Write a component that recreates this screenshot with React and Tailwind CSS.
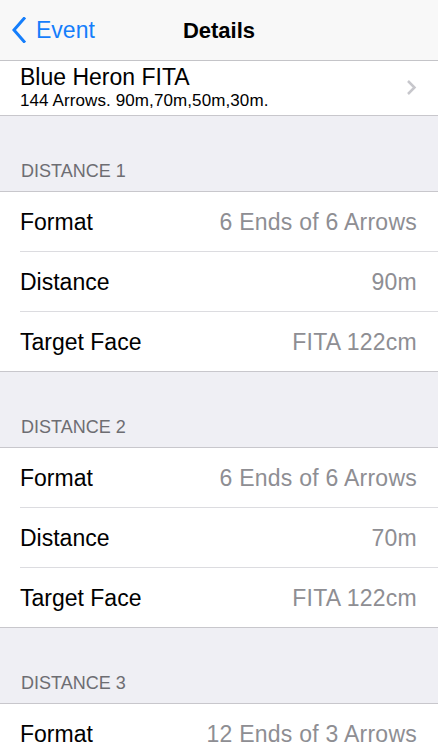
import React from "react";

const sections = [
    {
        title: "DISTANCE 1",
        rows: [
            { label: "Format", value: "6 Ends of 6 Arrows" },
            { label: "Distance", value: "90m" },
            { label: "Target Face", value: "FITA 122cm" },
        ],
    },
    {
        title: "DISTANCE 2",
        rows: [
            { label: "Format", value: "6 Ends of 6 Arrows" },
            { label: "Distance", value: "70m" },
            { label: "Target Face", value: "FITA 122cm" },
        ],
    },
    {
        title: "DISTANCE 3",
        rows: [
            { label: "Format", value: "12 Ends of 3 Arrows" },
            { label: "Distance", value: "50m" },
            { label: "Target Face", value: "FITA 122cm" },
        ],
    },
];

const App = () => {
    return (
        <div className="w-[438px] h-[750px] overflow-hidden bg-[#efeff4] font-['Liberation_Sans',Arial,sans-serif] text-black">
            {/* Nav bar */}
            <div className="relative h-[61px] bg-[#f8f8f8] border-b border-[#c4c4c8] flex items-center justify-center">
                <div className="absolute left-[12px] top-0 h-[60px] flex items-center text-[#157efb]">
                    <svg width="14" height="26" viewBox="0 0 14 26" className="mr-[10px]">
                        <path d="M12 1.5 L2 13 L12 24.5" fill="none" stroke="#157efb" strokeWidth="3" strokeLinecap="square" strokeLinejoin="miter" />
                    </svg>
                    <span className="text-[23px] leading-none">Event</span>
                </div>
                <span className="text-[22px] font-bold leading-none mt-[2px]">Details</span>
            </div>

            {/* Round cell */}
            <div className="h-[55px] bg-white border-b border-[#c8c7cc] flex items-center pl-[20px] pr-[21px]">
                <div className="flex-1 flex flex-col">
                    <span className="text-[23px] leading-[26px] -mt-[2px]">Blue Heron FITA</span>
                    <span className="text-[17px] leading-[20px] mt-[1px] tracking-[0.1px]">144 Arrows. 90m,70m,50m,30m.</span>
                </div>
                <svg width="11" height="17" viewBox="0 0 11 17" className="mb-[2px]">
                    <path d="M2 2 L8.5 8.5 L2 15" fill="none" stroke="#c7c7cc" strokeWidth="2.5" />
                </svg>
            </div>

            {sections.map((section) => (
                <div key={section.title}>
                    <div className="h-[76px] border-b border-[#c8c7cc] flex items-end pl-[21px] pb-[9px]">
                        <span className="text-[18px] leading-[21px] text-[#6d6d72]">{section.title}</span>
                    </div>
                    <div className="bg-white">
                        {section.rows.map((row, i) => {
                            const last = i === section.rows.length - 1;
                            return (
                                <div key={row.label} className={last ? "border-b border-[#c8c7cc]" : "pl-[20px]"}>
                                    <div className={`flex items-center justify-between pr-[21px] ${last ? "h-[59px] pl-[20px]" : "h-[60px] border-b border-[#dcdce0]"}`}>
                                        <span className="text-[23px] leading-none mt-[1px]">{row.label}</span>
                                        <span className="text-[23px] leading-none mt-[1px] tracking-[0.25px] text-[#8e8e93]">{row.value}</span>
                                    </div>
                                </div>
                            );
                        })}
                    </div>
                </div>
            ))}
        </div>
    );
};

export default App;
